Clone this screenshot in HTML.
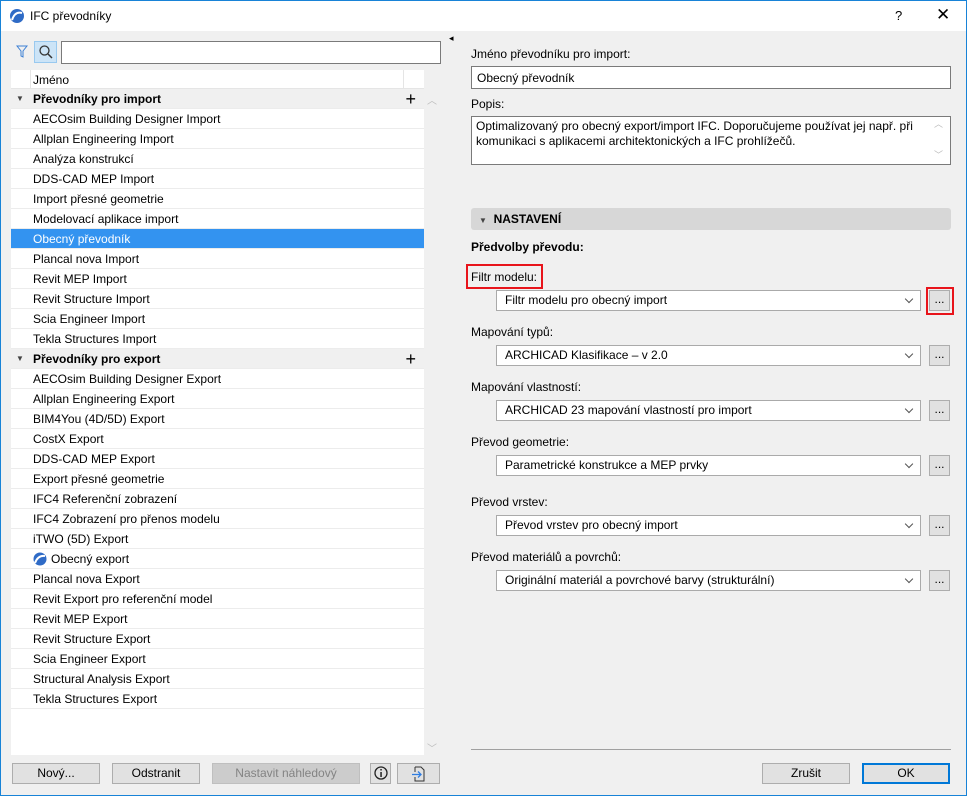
<!DOCTYPE html>
<html><head><meta charset="utf-8"><style>
*{box-sizing:border-box;margin:0;padding:0}
body{width:967px;height:796px;overflow:hidden;background:#f0f0f0;font-family:"Liberation Sans",sans-serif;font-size:12px;color:#000;position:relative}
.a{position:absolute}
.frame{left:0;top:0;width:967px;height:796px;border:1px solid #1883d7}
.title{left:1px;top:1px;width:965px;height:30px;background:#fff}
.row{position:absolute;left:11px;width:413px;height:20px;line-height:20px;padding-left:22px;border-bottom:1px solid #ececec;background:#fff;white-space:nowrap}
.grp{background:#f0f0f0;font-weight:bold;padding-left:0}
.grp .tri{position:absolute;left:5px;top:0;font-size:8px;color:#444;font-weight:normal}
.grp .t{position:absolute;left:22px}
.sel{background:#3393f0;color:#fff}
.lbl{position:absolute;left:471px;white-space:nowrap}
.dd{position:absolute;left:496px;width:425px;height:21px;border:1px solid #aaa;background:#fff;line-height:19px;padding-left:8px}
.dd:after{content:"";position:absolute;right:8px;top:5px;width:5px;height:5px;border-right:1px solid #555;border-bottom:1px solid #555;transform:rotate(45deg)}
.dots{position:absolute;left:929px;width:21px;height:21px;border:1px solid #adadad;background:#e1e1e1;text-align:center;line-height:17px}
.btn{position:absolute;height:21px;border:1px solid #adadad;background:#e1e1e1;text-align:center;line-height:19px}
</style></head><body>
<div class="a frame"></div>
<div class="a title"></div>
<svg class="a" style="left:9px;top:8px" width="16" height="16"><circle cx="8" cy="8" r="7" fill="#2f6bc6"/><path d="M3 12 Q6 3 13 5" stroke="#fff" stroke-width="2" fill="none"/></svg>
<div class="a" style="left:30px;top:9px;font-size:12px">IFC převodníky</div>
<div class="a" style="left:895px;top:8px;font-size:13px">?</div>
<div class="a" style="left:936px;top:5px;font-size:17px">✕</div>

<svg class="a" style="left:16px;top:45px" width="12" height="14"><path d="M1 1 H11 L7 6 V12 L5 11 V6 Z" fill="none" stroke="#3b7fd4"/></svg>
<div class="a" style="left:34px;top:41px;width:23px;height:22px;background:#cce4f7;border:1px solid #99c9ef"></div>
<svg class="a" style="left:38px;top:44px" width="16" height="16"><circle cx="6.5" cy="6.5" r="4.5" stroke="#333" fill="none" stroke-width="1.3"/><path d="M10 10 L14 14" stroke="#333" stroke-width="1.5"/></svg>
<div class="a" style="left:61px;top:41px;width:380px;height:23px;border:1px solid #7a7a7a;background:#fff"></div>

<div class="a" style="left:11px;top:70px;width:413px;height:685px;background:#fff"></div>
<div class="a" style="left:11px;top:70px;width:413px;height:19px;background:#fff;border-bottom:1px solid #e5e5e5"></div>
<div class="a" style="left:30px;top:70px;width:1px;height:19px;background:#e5e5e5"></div>
<div class="a" style="left:403px;top:70px;width:1px;height:19px;background:#e5e5e5"></div>
<div class="a" style="left:33px;top:73px">Jméno</div>

<div class="row grp" style="top:89px"><span class="tri">▼</span><span class="t">Převodníky pro import</span><span style="position:absolute;right:8px;font-weight:normal;font-size:18px">+</span></div>
<div class="row" style="top:109px">AECOsim Building Designer Import</div>
<div class="row" style="top:129px">Allplan Engineering Import</div>
<div class="row" style="top:149px">Analýza konstrukcí</div>
<div class="row" style="top:169px">DDS-CAD MEP Import</div>
<div class="row" style="top:189px">Import přesné geometrie</div>
<div class="row" style="top:209px">Modelovací aplikace import</div>
<div class="row sel" style="top:229px">Obecný převodník</div>
<div class="row" style="top:249px">Plancal nova Import</div>
<div class="row" style="top:269px">Revit MEP Import</div>
<div class="row" style="top:289px">Revit Structure Import</div>
<div class="row" style="top:309px">Scia Engineer Import</div>
<div class="row" style="top:329px">Tekla Structures Import</div>
<div class="row grp" style="top:349px"><span class="tri">▼</span><span class="t">Převodníky pro export</span><span style="position:absolute;right:8px;font-weight:normal;font-size:18px">+</span></div>
<div class="row" style="top:369px">AECOsim Building Designer Export</div>
<div class="row" style="top:389px">Allplan Engineering Export</div>
<div class="row" style="top:409px">BIM4You (4D/5D) Export</div>
<div class="row" style="top:429px">CostX Export</div>
<div class="row" style="top:449px">DDS-CAD MEP Export</div>
<div class="row" style="top:469px">Export přesné geometrie</div>
<div class="row" style="top:489px">IFC4 Referenční zobrazení</div>
<div class="row" style="top:509px">IFC4 Zobrazení pro přenos modelu</div>
<div class="row" style="top:529px">iTWO (5D) Export</div>
<div class="row" style="top:549px"><svg style="position:absolute;left:22px;top:3px" width="14" height="14"><circle cx="7" cy="7" r="6.5" fill="#2f6bc6"/><path d="M2 11 Q5 3 12 4" stroke="#fff" stroke-width="2" fill="none"/></svg><span style="padding-left:18px">Obecný export</span></div>
<div class="row" style="top:569px">Plancal nova Export</div>
<div class="row" style="top:589px">Revit Export pro referenční model</div>
<div class="row" style="top:609px">Revit MEP Export</div>
<div class="row" style="top:629px">Revit Structure Export</div>
<div class="row" style="top:649px">Scia Engineer Export</div>
<div class="row" style="top:669px">Structural Analysis Export</div>
<div class="row" style="top:689px">Tekla Structures Export</div>
<div class="a" style="left:427px;top:92px;color:#bbb;font-size:10px">︿</div>
<div class="a" style="left:427px;top:740px;color:#bbb;font-size:10px">﹀</div>

<div class="btn" style="left:12px;top:763px;width:88px">Nový...</div>
<div class="btn" style="left:112px;top:763px;width:88px">Odstranit</div>
<div class="btn" style="left:212px;top:763px;width:148px;background:#ccc;border-color:#bfbfbf;color:#838383">Nastavit náhledový</div>
<div class="btn" style="left:370px;top:763px;width:21px"><svg width="14" height="14" style="margin-top:2px"><circle cx="7" cy="7" r="6" fill="none" stroke="#222" stroke-width="1.3"/><rect x="6.3" y="6" width="1.5" height="5" fill="#222"/><rect x="6.3" y="3" width="1.5" height="1.5" fill="#222"/></svg></div>
<div class="btn" style="left:397px;top:763px;width:43px"><svg width="16" height="16" style="margin-top:2px"><path d="M4 1 H10 L13 4 V15 H4 V11 M4 6 V1" fill="none" stroke="#333"/><path d="M1 8.5 H10 M7 5.5 L10 8.5 L7 11.5" fill="none" stroke="#2f7de1" stroke-width="1.3"/></svg></div>

<div class="a" style="left:449px;top:33px;font-size:9px">◂</div>

<div class="lbl" style="top:47px">Jméno převodníku pro import:</div>
<div class="a" style="left:471px;top:66px;width:480px;height:23px;border:1px solid #7a7a7a;background:#fff;padding:4px 5px">Obecný převodník</div>
<div class="lbl" style="top:97px">Popis:</div>
<div class="a" style="left:471px;top:116px;width:480px;height:49px;border:1px solid #7a7a7a;background:#fff;padding:2px 4px;line-height:15px">Optimalizovaný pro obecný export/import IFC. Doporučujeme používat jej např. při<br>komunikaci s aplikacemi architektonických a IFC prohlížečů.</div>
<div class="a" style="left:934px;top:117px;color:#bbb;font-size:9px">︿</div>
<div class="a" style="left:934px;top:148px;color:#bbb;font-size:9px">﹀</div>
<div class="a" style="left:471px;top:208px;width:480px;height:22px;background:#d7d7d7;border-radius:3px;font-weight:bold;line-height:22px;padding-left:8px"><span style="font-size:8px;color:#444">▼</span>&nbsp; NASTAVENÍ</div>
<div class="lbl" style="top:240px;font-weight:bold">Předvolby převodu:</div>
<div class="a" style="left:466px;top:264px;width:77px;height:25px;border:2px solid #e8141b"></div>
<div class="lbl" style="top:270px">Filtr modelu:</div>
<div class="dd" style="top:290px">Filtr modelu pro obecný import</div>
<div class="a" style="left:926px;top:287px;width:28px;height:28px;border:2px solid #e8141b"></div>
<div class="dots" style="top:290px">...</div>
<div class="lbl" style="top:325px">Mapování typů:</div>
<div class="dd" style="top:345px">ARCHICAD Klasifikace – v 2.0</div><div class="dots" style="top:345px">...</div>
<div class="lbl" style="top:380px">Mapování vlastností:</div>
<div class="dd" style="top:400px">ARCHICAD 23 mapování vlastností pro import</div><div class="dots" style="top:400px">...</div>
<div class="lbl" style="top:435px">Převod geometrie:</div>
<div class="dd" style="top:455px">Parametrické konstrukce a MEP prvky</div><div class="dots" style="top:455px">...</div>
<div class="lbl" style="top:495px">Převod vrstev:</div>
<div class="dd" style="top:515px">Převod vrstev pro obecný import</div><div class="dots" style="top:515px">...</div>
<div class="lbl" style="top:550px">Převod materiálů a povrchů:</div>
<div class="dd" style="top:570px">Originální materiál a povrchové barvy (strukturální)</div><div class="dots" style="top:570px">...</div>

<div class="a" style="left:471px;top:749px;width:480px;height:1px;background:#a0a0a0"></div>
<div class="btn" style="left:762px;top:763px;width:88px">Zrušit</div>
<div class="btn" style="left:862px;top:763px;width:88px;border:2px solid #0078d7;line-height:17px">OK</div>
</body></html>
